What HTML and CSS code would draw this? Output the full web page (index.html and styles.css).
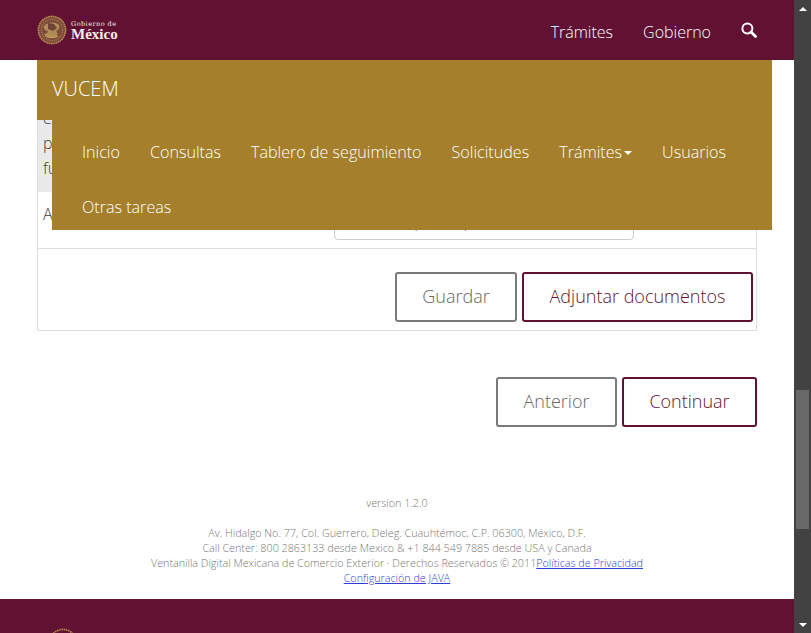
FILE: index.html
```html
<!DOCTYPE html>
<html lang="es">
<head>
<meta charset="utf-8">
<title>VUCEM</title>
<link rel="stylesheet" href="styles.css">
</head>
<body>
<div class="page">
  <header class="topbar">
    <a class="brand" href="#">
      <svg class="emblem" viewBox="0 0 30 30" aria-hidden="true">
        <circle cx="15" cy="15" r="14" fill="#7d4a3c"/>
        <circle cx="15" cy="15" r="13.6" fill="none" stroke="#b58b4f" stroke-width="1.6" stroke-dasharray="1.6 0.7"/>
        <circle cx="15" cy="15" r="10.6" fill="none" stroke="#a8824c" stroke-width="1.2" stroke-dasharray="1 1"/>
        <path d="M7 11c3-4 11-5 15-1 1 3 0 5-3 6 2 2 2 5-2 7-4 1-8 0-10-4 2 0 4-1 4-3-2 0-5-2-4-5z" fill="#b08d55"/>
        <path d="M11 8l6 1 3 4-4 3-5-2z" fill="#6e4439"/>
        <path d="M9 21c3 2 9 2 12 0" fill="none" stroke="#c29d62" stroke-width="1.2"/>
      </svg>
      <span class="brand-text"><span class="brand-small">Gobierno de</span><span class="brand-big">México</span></span>
    </a>
    <nav class="topnav">
      <a href="#">Trámites</a>
      <a href="#">Gobierno</a>
      <a href="#" class="search" aria-label="Buscar">
        <svg viewBox="0 0 16 16" width="16" height="16" aria-hidden="true">
          <circle cx="6.4" cy="6.4" r="5" fill="none" stroke="#fff" stroke-width="2"/>
          <path d="M10 10l4.6 4.4" stroke="#fff" stroke-width="2.8" stroke-linecap="round"/>
        </svg>
      </a>
    </nav>
  </header>

  <main class="content">
    <div class="goldnav">
      <div class="goldnav-title">VUCEM</div>
      <ul class="goldnav-menu">
        <li><a href="#">Inicio</a></li>
        <li><a href="#">Consultas</a></li>
        <li><a href="#">Tablero de seguimiento</a></li>
        <li><a href="#">Solicitudes</a></li>
        <li><a href="#">Trámites<span class="caret"></span></a></li>
        <li><a href="#">Usuarios</a></li>
        <li><a href="#">Otras tareas</a></li>
      </ul>
    </div>

    <section class="panel">
      <div class="notice">
        <p>e</p>
        <p>p</p>
        <p>fu</p>
      </div>
      <div class="field-row">
        <span class="field-label">A</span>
        <div class="field-input">@pueblap</div>
      </div>
      <div class="panel-actions">
        <button class="btn btn-grey btn-guardar" type="button">Guardar</button>
        <button class="btn btn-maroon btn-adjuntar" type="button">Adjuntar documentos</button>
      </div>
    </section>

    <div class="wizard-actions">
      <button class="btn btn-grey btn-anterior" type="button">Anterior</button>
      <button class="btn btn-maroon btn-continuar" type="button">Continuar</button>
    </div>

    <footer class="legal">
      <p class="version">version 1.2.0</p>
      <p>Av. Hidalgo No. 77, Col. Guerrero, Deleg. Cuauhtémoc, C.P. 06300, México, D.F.</p>
      <p>Call Center: 800 2863133 desde Mexico &amp; +1 844 549 7885 desde USA y Canada</p>
      <p>Ventanilla Digital Mexicana de Comercio Exterior · Derechos Reservados © 2011<a href="#">Políticas de Privacidad</a></p>
      <p><a href="#">Configuración de JAVA</a></p>
    </footer>
  </main>

  <div class="bottombar">
    <svg class="emblem" viewBox="0 0 30 30" aria-hidden="true">
      <circle cx="15" cy="15" r="13.6" fill="none" stroke="#b58b4f" stroke-width="1.6" stroke-dasharray="1.6 0.7"/>
    </svg>
  </div>
</div>

<div class="scrollbar" aria-hidden="true">
  <span class="arrow arrow-up"></span>
  <div class="track"><div class="thumb"></div></div>
  <span class="arrow arrow-down"></span>
</div>
</body>
</html>
```
FILE: styles.css
```css
* { box-sizing: border-box; }
html, body { margin: 0; padding: 0; height: 633px; overflow: hidden; }
body {
  display: flex;
  font-family: "Open Sans", sans-serif;
  font-weight: 300;
  background: #fff;
  color: #404041;
}
.page { width: 794px; height: 633px; overflow: hidden; display: flex; flex-direction: column; flex: none; }

.topbar {
  flex: none;
  height: 60px;
  background: #611232;
  display: flex;
  align-items: center;
  justify-content: space-between;
  padding: 0 37px;
}
.brand { display: flex; align-items: center; gap: 4px; text-decoration: none; color: #fff; }
.emblem { width: 30px; height: 30px; display: block; }
.brand-text { display: flex; flex-direction: column; color: #f3ecea; padding-bottom: 2px; }
.brand-small { font-family: "DejaVu Serif", serif; font-size: 6.5px; line-height: 8px; letter-spacing: 0.45px; }
.brand-big { font-family: "Liberation Serif", serif; font-size: 15px; line-height: 10px; font-weight: 700; padding-top: 1px; }
.topnav { display: flex; align-items: center; gap: 30px; padding-top: 4px; }
.topnav a { color: #fff; text-decoration: none; font-size: 16px; line-height: 22px; }
.topnav .search { display: flex; margin-top: -4px; }

.content { flex: 1; position: relative; padding: 60px 37px 0; min-height: 0; }

.goldnav { position: absolute; top: 0; left: 37px; width: 735px; z-index: 2; }
.goldnav-title {
  height: 60px;
  background: #a57f2c;
  color: #fff;
  font-size: 20px;
  line-height: 58px;
  padding-left: 15px;
}
.goldnav-menu {
  list-style: none;
  margin: 0 0 0 15px;
  padding: 0 15px;
  background: #a57f2c;
  display: flex;
  flex-wrap: wrap;
  height: 110px;
}
.goldnav-menu li { height: 55px; }
.goldnav-menu a {
  display: flex;
  align-items: center;
  height: 55px;
  padding: 8px 15px 0;
  color: #fff;
  text-decoration: none;
  font-size: 16.12px;
}
.caret {
  display: inline-block;
  margin-left: 2px;
  margin-top: 2px;
  border-top: 4px solid #fff;
  border-left: 4px solid transparent;
  border-right: 4px solid transparent;
}

.panel { border: 1px solid #ddd; border-top: 0; width: 720px; }
.notice {
  height: 72px;
  background: #e9e9e9;
  padding: 0 5px;
  font-size: 16px;
  line-height: 25px;
  color: #404041;
  overflow: hidden;
}
.notice p { margin: 0; }
.notice p:first-child { margin-top: -14px; }
.field-row {
  height: 57px;
  border-bottom: 1px solid #ddd;
  display: flex;
  align-items: flex-start;
  font-size: 16px;
}
.field-label { margin: 11px 0 0 5px; width: 11px; flex: none; }
.field-input {
  width: 300px;
  height: 48px;
  margin-left: 280px;
  border: 1px solid #ccc;
  border-radius: 4px;
  padding: 17px 0 0 65px;
  color: #555;
}
.panel-actions {
  height: 81px;
  display: flex;
  justify-content: flex-end;
  align-items: flex-start;
  gap: 5px;
  padding: 23px 3px 0 0;
}
.btn {
  height: 50px;
  background: #fff;
  border-radius: 3px;
  border: 2px solid;
  font-family: "Open Sans", sans-serif;
  font-weight: 300;
  font-size: 18px;
  padding: 0 0 2px;
}
.btn-grey { border-color: #7a7a7a; color: #666; }
.btn-maroon { border-color: #611232; color: #611232; }
.btn-guardar { width: 122px; }
.btn-adjuntar { width: 231px; }
.btn-anterior { width: 121px; }
.btn-continuar { width: 135px; }
.wizard-actions {
  display: flex;
  justify-content: flex-end;
  gap: 5px;
  margin-top: 46px;
  width: 720px;
}
.legal {
  margin-top: 69px;
  width: 720px;
  text-align: center;
  font-size: 10.75px;
  line-height: 15px;
  color: #777;
}
.legal p { margin: 0; }
.legal .version { margin-bottom: 15px; }
.legal a { color: #2b3fd6; text-decoration: underline; }

.bottombar { flex: none; height: 34px; background: #611232; padding: 29px 0 0 48px; overflow: hidden; }

.scrollbar { width: 17px; height: 633px; background: #424242; display: flex; flex-direction: column; flex: none; }
.arrow { flex: none; height: 17px; display: flex; align-items: center; justify-content: center; }
.arrow::before { content: ""; border-left: 4px solid transparent; border-right: 4px solid transparent; }
.arrow-up::before { border-bottom: 4px solid #fff; }
.arrow-down::before { border-top: 4px solid #fff; }
.track { flex: 1; display: flex; flex-direction: column; justify-content: flex-end; padding: 0 2px 87px; }
.thumb { height: 139px; background: #686868; }
```
